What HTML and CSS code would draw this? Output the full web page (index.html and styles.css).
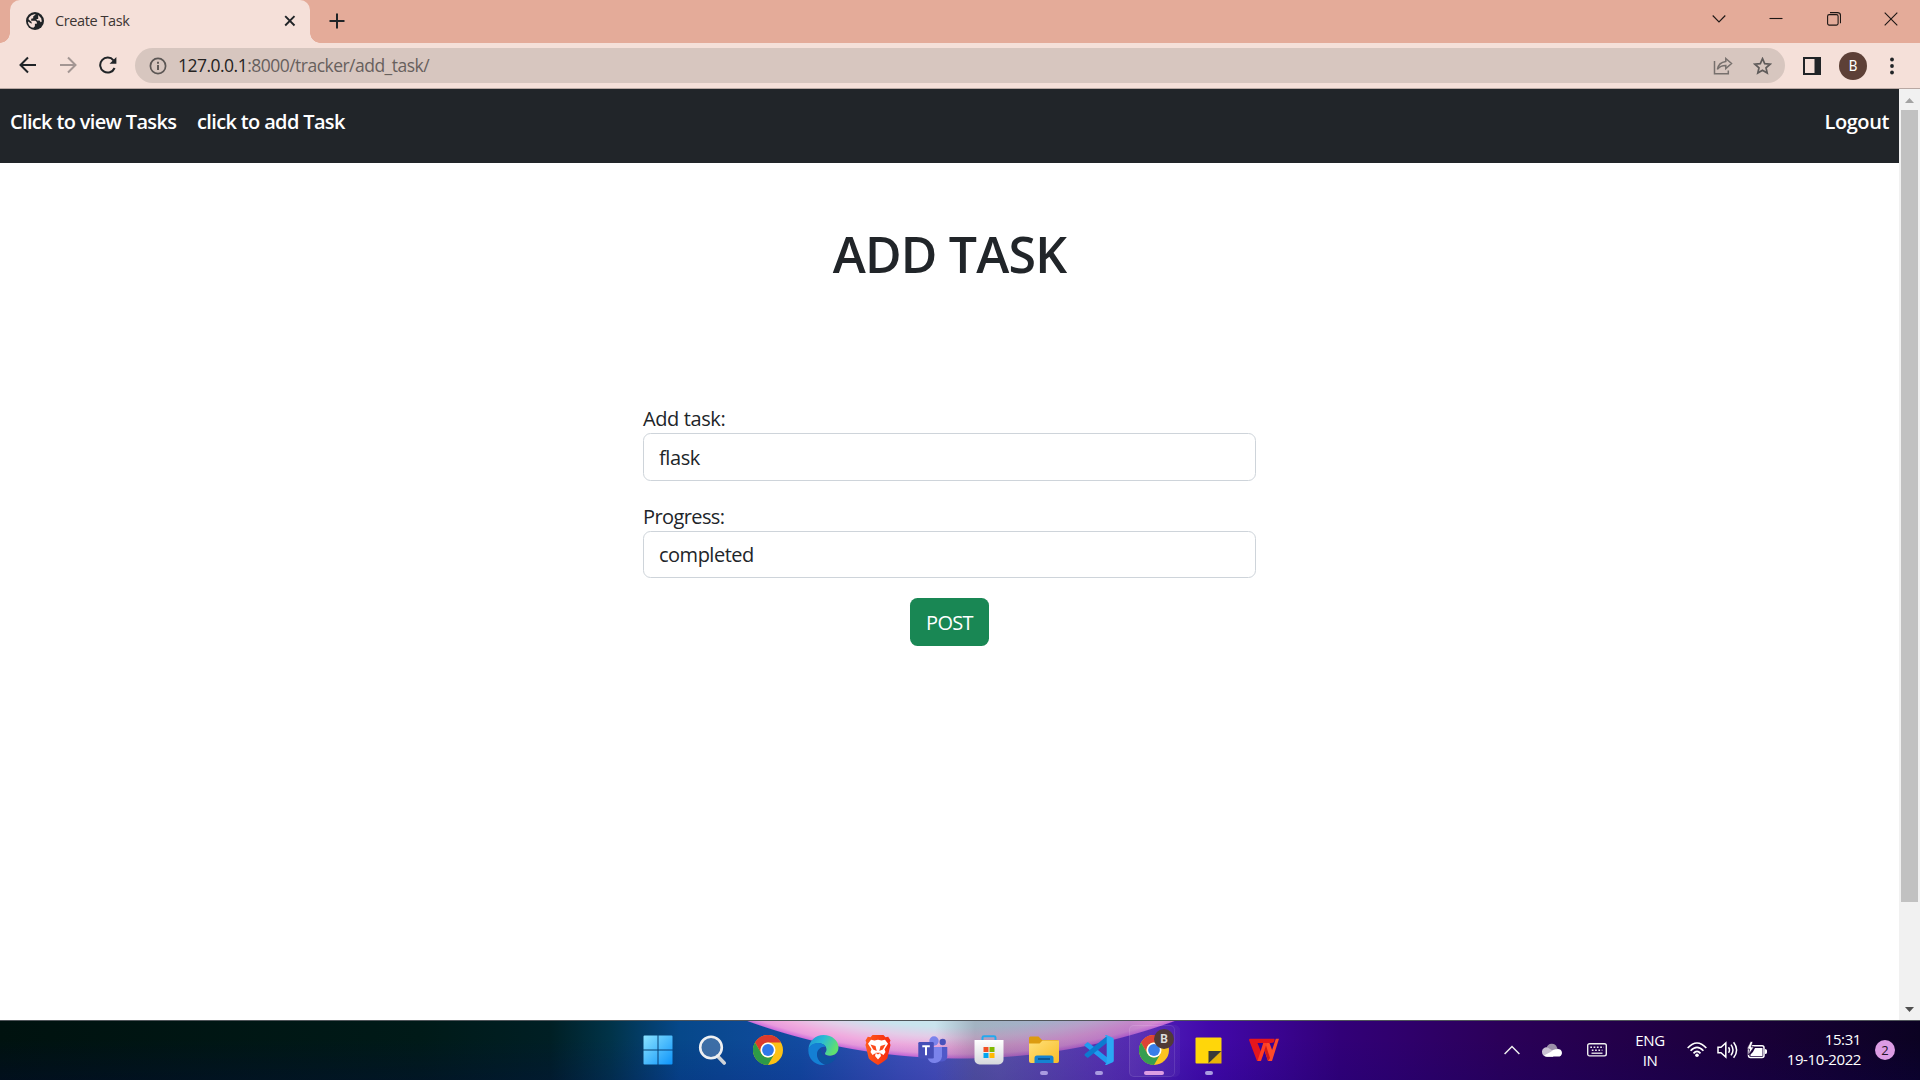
FILE: index.html
```
<!DOCTYPE html>
<html lang="en">
<head>
<meta charset="utf-8">
<title>Create Task</title>
<link rel="stylesheet" href="styles.css">
</head>
<body>
<div class="screen">
  <header class="tabstrip">
    <div class="tab">
      <svg class="globe" width="18" height="18" viewBox="0 0 18 18"><circle cx="9" cy="9" r="9" fill="#202427"/><path d="M9.8 2.2 7.2 4.6v1.6l-2 .6v1.9h4.2l1.4 1.2v1.8h-1.9v2.6l-1.5 1.5C4.200 15.300 2 12.700 2 9.400l3.600 2.300V10L2.400 7.200C3.200 4.300 6 2.100 9.800 2.200zM12.200 3l3 3.200.6 3.200-1.200.8-1-1.700h-2.400l-.9-1.600h1.900z" fill="#f5e0d9"/></svg>
      <span class="tab-title">Create Task</span>
      <svg class="tab-close" width="12" height="12" viewBox="0 0 12 12"><path d="M1.200 1.200 10.500 10.500M10.500 1.200 1.200 10.500" stroke="#202427" stroke-width="1.900"/></svg>
    </div>
    <svg class="newtab" width="16" height="16" viewBox="0 0 16 16"><path d="M8 .5v15M.5 8h15" stroke="#202427" stroke-width="2"/></svg>
    <div class="window-buttons">
      <svg width="14" height="14" viewBox="0 0 14 14"><path d="M.7 3.500 7 10l6.300-6.500"/></svg>
      <svg width="14" height="14" viewBox="0 0 14 14"><path d="M.5 6.500h13"/></svg>
      <svg width="14" height="14" viewBox="0 0 14 14"><rect x=".6" y="2.600" width="10.500" height="10.500" rx="1.600"/><path d="M3 .6h7.500q3 0 3 3v7.600"/></svg>
      <svg width="14" height="14" viewBox="0 0 14 14"><path d="m.7.7 12.600 12.600M13.300.7.7 13.300"/></svg>
    </div>
  </header>
  <div class="toolbar">
    <svg class="nav-icon" width="18" height="18" viewBox="0 0 18 18"><path d="M17 9H2M9 1.500 1.500 9 9 16.500"/></svg>
    <svg class="nav-icon dim" width="18" height="18" viewBox="0 0 18 18"><path d="M1 9h15M9 1.500 16.500 9 9 16.500"/></svg>
    <svg class="nav-icon" width="18" height="18" viewBox="0 0 18 18"><path d="M15.600 12A7.500 7.500 0 1 1 14.500 4.300"/><path d="M17.400 1v6.800h-6.800z" fill="#202427" stroke="none"/></svg>
    <div class="omnibox">
      <svg width="18" height="18" viewBox="0 0 18 18" fill="none" stroke="#5b5654"><circle cx="9" cy="9" r="7.600" stroke-width="1.700"/><path d="M9 8v5M9 4.800v1.900" stroke-width="1.900"/></svg>
      <span class="url"><b>127.0.0.1</b>:8000/tracker/add_task/</span>
      <svg class="share" width="20" height="18" viewBox="0 0 20 18" fill="none" stroke="#77706d" stroke-width="1.500"><path d="M1.500 4v12.800h13.800v-3.300"/><path d="M12.800 1.500 18.500 6.500l-5.700 5V8.600c-4 0-6.300 1-8.400 3.700.7-4.400 3.400-7.300 8.400-7.900z"/></svg>
      <svg width="19" height="18" viewBox="0 0 19 18" fill="none" stroke="#5f5b5a" stroke-width="1.700"><path d="m9.500 1.700 2.200 5 5.400.5-4.100 3.600 1.200 5.300-4.700-2.800-4.700 2.800L6 10.800 1.900 7.200l5.400-.5z"/></svg>
    </div>
    <svg class="panel" width="18" height="18" viewBox="0 0 18 18"><path d="M1 1h16v16H1z" fill="none" stroke="#202427" stroke-width="2"/><path d="M11.500 1H17v16h-5.500z" fill="#202427"/></svg>
    <span class="avatar">B</span>
    <svg class="dots" width="4" height="18" viewBox="0 0 4 18" fill="#202427"><circle cx="2" cy="2.500" r="1.900"/><circle cx="2" cy="9" r="1.900"/><circle cx="2" cy="15.500" r="1.900"/></svg>
  </div>
  <div class="viewport">
    <main class="page">
      <nav class="navbar">
        <a class="link-view">Click to view Tasks</a>
        <a class="link-add">click to add Task</a>
        <a class="link-out">Logout</a>
      </nav>
      <h1>ADD TASK</h1>
      <form class="form">
        <label class="label-task" for="task">Add task:</label>
        <input id="task" class="input-task" type="text" value="flask">
        <label class="label-progress" for="progress">Progress:</label>
        <input id="progress" class="input-progress" type="text" value="completed">
        <button type="button">POST</button>
      </form>
    </main>
    <div class="scrollbar">
      <svg width="9" height="5" viewBox="0 0 9 5"><path d="M0 5 4.500 0 9 5z" fill="#a3a3a3"/></svg>
      <div class="thumb"></div>
      <svg class="down" width="9" height="5" viewBox="0 0 9 5"><path d="M0 0h9L4.500 5z" fill="#505050"/></svg>
    </div>
  </div>
  <footer class="taskbar">
    <svg width="0" height="0" class="defs">
      <defs>
        <linearGradient id="win" x1="0" y1="0" x2="1" y2="1"><stop offset="0" stop-color="#8be3ff"/><stop offset="1" stop-color="#0d94fa"/></linearGradient>
        <linearGradient id="edgeTop" x1="0" y1="0" x2="1" y2=".4"><stop offset="0" stop-color="#1b8fd8"/><stop offset=".5" stop-color="#2bbbd4"/><stop offset="1" stop-color="#60e070"/></linearGradient>
        <linearGradient id="store" x1="0" y1="0" x2="0" y2="1"><stop offset="0" stop-color="#fff"/><stop offset="1" stop-color="#d5d8dc"/></linearGradient>
        <linearGradient id="folder" x1="0" y1="0" x2="1" y2="1"><stop offset="0" stop-color="#ffe07a"/><stop offset="1" stop-color="#f8bd28"/></linearGradient>
        <linearGradient id="brave" x1="0" y1="0" x2="1" y2="0"><stop offset="0" stop-color="#ff5a1c"/><stop offset="1" stop-color="#f62a10"/></linearGradient>
        <symbol id="chrome" viewBox="0 0 30 30"><circle cx="15" cy="15" r="15" fill="#fbc116"/><path d="M2 7.500A15 15 0 0 1 28 7.500H15A7.500 7.500 0 0 0 8.500 18.800z" fill="#dc3a2d"/><path d="M2 7.500 8.500 18.800A7.500 7.500 0 0 0 21.500 18.800L15 30A15 15 0 0 1 2 7.500z" fill="#2d9a48"/><circle cx="15" cy="15" r="7.500" fill="#fff"/><circle cx="15" cy="15" r="5.900" fill="#2f78e8"/></symbol>
      </defs>
    </svg>
    <div class="apps">
      <div class="app"><svg width="30" height="30" viewBox="0 0 30 30"><path d="M.5 1.500q0-1 1-1H14.500V14.500H.5zM15.500.5H28.500q1 0 1 1V14.500h-14zM.5 15.500H14.500v14H1.500q-1 0-1-1zM15.500 15.500h14v13q0 1-1 1h-13z" fill="url(#win)"/></svg></div>
      <div class="app"><svg width="30" height="30" viewBox="0 0 30 30"><path d="m19.500 21 6.700 7" stroke="#cfd3d8" stroke-width="3.600" stroke-linecap="round"/><circle cx="13" cy="12.500" r="10.800" fill="#8aa8c866" stroke="#eef0f2" stroke-width="2.600"/></svg></div>
      <div class="app"><svg width="30" height="30"><use href="#chrome"/></svg></div>
      <div class="app"><svg width="31" height="30" viewBox="0 0 31 30"><path d="M.5 14C1 6 7.500 0 15.500 0 24 0 30.500 5.500 30.500 12.500c0 5-3.800 8.200-8.500 8.200-3 0-5-.9-5-2.200 0-1.100 1.500-1.700 1.500-4C18.500 10 14 7.800 10 8.200 5.500 8.500 2 10.500.5 14z" fill="url(#edgeTop)"/><path d="M.4 14C2 9.500 6.500 8 10.200 8c3.500 0 6.600 1.700 7.800 4.200-4-1.500-9 2-9 7.200 0 5 3.600 9 8.300 10.200C8 31.500-.5 24 .4 14z" fill="#1480d4"/><path d="M12.300 13.600C7.500 17 8.500 26.500 17.300 29.600c5.200-.6 8.800-3.400 10.900-7.100.5-.9 0-1.300-.9-.9-6 3-14.500.8-15-8z" fill="#0d529f"/></svg></div>
      <div class="app"><svg width="26" height="30" viewBox="0 0 26 30"><path d="M7.500 0h11l2 2.200 2.700-.4 2.300 3.700-.8 2 .8 2.500-3.200 13.200Q21.500 25 13 30 4.500 25 3.700 23.200L.5 10l.8-2.500-.8-2 2.300-3.700 2.700.4z" fill="url(#brave)"/><path d="m13 4.700 3.500.7 3.500-.7 3 4-3.500 5.500 1 2.700-2 3-3.300-2 .8 3.200-3 3.300-3-3.300.8-3.200-3.300 2-2-3 1-2.700L3 8.700l3-4 3.500.7z" fill="#fff"/><path d="m5.500 9.500 5 1.500 1.200 5-3.500-1.500M20.500 9.500l-5 1.500-1.200 5 3.500-1.500M10.500 17.800h5L13 19.600z" fill="#fb4a1a"/></svg></div>
      <div class="app"><svg width="30" height="28" viewBox="0 0 30 28"><circle cx="24.700" cy="6" r="3.200" fill="#4a52bb"/><path d="M19 11h10.300v9a5.500 5.500 0 0 1-8 5z" fill="#5059c9"/><circle cx="16" cy="5" r="4.700" fill="#7b83eb"/><path d="M10 11h14v9.500A7.500 7.500 0 0 1 9.500 22z" fill="#7b83eb"/><rect x=".3" y="6" width="15.500" height="16.500" rx="1.300" fill="#464eb8"/><path d="M4.300 10.300h7.500M8 10.300v9" stroke="#fff" stroke-width="2" fill="none"/></svg></div>
      <div class="app"><svg width="30" height="30" viewBox="0 0 30 30"><path d="M8.500 6V2.500Q8.500 1.200 10 1.200h10q1.500 0 1.500 1.300V6" fill="none" stroke="#23a9ee" stroke-width="2"/><path d="M.5 5h29v19.500a5 5 0 0 1-5 5h-19a5 5 0 0 1-5-5z" fill="url(#store)"/><path d="M9.500 12h5v5h-5z" fill="#f05024"/><path d="M15.500 12h5v5h-5z" fill="#7fb900"/><path d="M9.500 18h5v5h-5z" fill="#02a4ef"/><path d="M15.500 18h5v5h-5z" fill="#ffb902"/></svg></div>
      <div class="app run"><svg width="30" height="28" viewBox="0 0 30 28"><path d="M0 2q0-1.500 1.500-1.500h8l3.500 3.500h15q2 0 2 2v8H0z" fill="#dc9b10"/><path d="M0 7.500h10.500L13.500 4.500H30V25q0 2-2 2H2q-2 0-2-2z" fill="url(#folder)"/><path d="M5.500 27v-5q0-2.500 2.500-2.500h14q2.500 0 2.500 2.500v5z" fill="#1583d2"/><path d="M9 23h12" stroke="#0a4a80" stroke-width="1.500"/></svg></div>
      <div class="app run"><svg width="30" height="30" viewBox="0 0 30 30"><path d="m1 9.200 2-1.700q.7-.4 1.400.1L23 22.200V29L.8 11q-.8-.9.200-1.800z" fill="#1f9cf0"/><path d="m1 20.800 2 1.700q.7.4 1.400-.1L23 7.800V1L.8 19q-.8.900.2 1.800z" fill="#0c7bd0"/><path d="m22.500 0 6.300 2.800q1 .5 1 1.700v21q0 1.200-1 1.700L22.500 30q-1 .2-1.500-.8L22.700 28V2L21 .8q.5-1 1.500-.8z" fill="#2ba8f4"/></svg></div>
      <div class="app run active"><svg width="30" height="30"><use href="#chrome"/></svg><span class="profile">B</span></div>
      <div class="app run"><svg width="27" height="27" viewBox="0 0 27 27"><path d="M1.500.5h24q1 0 1 1v12.500L14 26.500H1.500q-1 0-1-1v-24q0-1 1-1z" fill="#ffd60a"/><path d="M13.500 14h13L13.500 26.500z" fill="#393939"/><path d="M26.500 14v12.500h-13z" fill="#e8b408"/></svg></div>
      <div class="app"><svg width="30" height="24" viewBox="0 0 30 24"><path d="M1 .8h24.500Q26 5 22 5H8.500l5 12.500L10.500 23H8L.2 2.500Q-.2.8 1 .8z" fill="#e5161c"/><path d="M17 5h3.500l2.600 7L26.800.8H30L23 23h-4L15.300 12z" fill="#ff4a28"/><path d="M14.200 5h4L12 23H8.500z" fill="#ff3d24"/><path d="m15.500 12 1.500-4.500L21 20l-2 3z" fill="#d01818"/></svg></div>
    </div>
    <div class="tray">
      <svg width="16" height="10" viewBox="0 0 16 10"><path d="m.6 9 7.400-7.500L15.400 9" fill="none" stroke="#eee" stroke-width="1.500"/></svg>
      <svg class="cloud" width="20" height="14" viewBox="0 0 20 14"><path d="M4.500 5A5.500 5.500 0 0 1 15 4.500L17 9 6 10z" fill="#9b8fa8"/><path d="M0 9a4.300 4.300 0 0 1 6-4.300L13 9l-2 5H5a5 5 0 0 1-5-5z" fill="#c9c2d2"/><path d="M2 12.500 9 8.700q2-3 5.500-2.500A4 4 0 0 1 20 9.900 4 4 0 0 1 16 13.500H5q-2 0-3-1z" fill="#fff"/></svg>
      <svg class="keys" width="20" height="14" viewBox="0 0 20 14"><rect x=".7" y=".7" width="18.600" height="12.200" rx="1.800" fill="none" stroke="#eee" stroke-width="1.400"/><path d="M3.300 4.200h13.400M4.800 7.200h10.600" stroke="#eee" stroke-width="1.500" stroke-dasharray="1.700 1.600"/><path d="M4.500 10.200h11" stroke="#eee" stroke-width="1.300"/></svg>
      <div class="lang"><span>ENG</span><span>IN</span></div>
      <svg class="wifi" width="20" height="16" viewBox="0 0 20 16" fill="none" stroke="#fff" stroke-width="1.700"><path d="M.7 6Q10-4 19.300 6M3.600 8.800Q10 1.800 16.400 8.800M6.500 11.400Q10 7.500 13.500 11.400"/><circle cx="10" cy="13.300" r="1.800" fill="#fff" stroke="none"/></svg>
      <svg class="sound" width="21" height="18" viewBox="0 0 21 18" fill="none" stroke="#fff" stroke-width="1.500"><path d="M1 6.200h3L8.800 2v14L4 11.800H1z"/><path d="M11.500 6.200q2 2.800 0 5.600M14 3.600q4 5.400 0 10.800M16.600 1.200q6 7.800 0 15.600"/></svg>
      <svg class="battery" width="20" height="18" viewBox="0 0 20 18"><rect x="1.500" y="4.800" width="15.500" height="11.700" rx="2" fill="none" stroke="#fff" stroke-width="1.500"/><path d="M8 7h7.500v8H3.500v-1.500q3-2.500 4.500-6.500zM18 8q2 0 2 1.500v2Q20 13 18 13z" fill="#fff"/><path d="M3.500.5 0 8h2.500L1.500 14 7 6H4.200L6 .5z" fill="#fff" stroke="#1c0038" stroke-width=".7"/></svg>
      <div class="clock"><span>15:31</span><span>19-10-2022</span></div>
      <span class="badge">2</span>
    </div>
  </footer>
</div>
</body>
</html>
```
FILE: styles.css
```
* { box-sizing: border-box; }
body { margin: 0; font-family: "Open Sans", "Noto Sans", sans-serif; overflow: hidden; background: #fff; }
svg { display: block; flex: none; }
.screen { width: 1920px; height: 1080px; display: flex; flex-direction: column; }

.tabstrip { height: 43px; background: #e4ab99; display: flex; align-items: flex-start; padding-left: 10px; }
.tab { position: relative; width: 300px; height: 43px; background: #f5e0d9; border-radius: 10px 10px 0 0; display: flex; align-items: center; padding: 0 14px 1px 16px; }
.tab::before, .tab::after { content: ""; position: absolute; bottom: 0; width: 10px; height: 10px; }
.tab::before { left: -10px; background: radial-gradient(circle at 0 0, transparent 9.5px, #f5e0d9 10px); }
.tab::after { right: -10px; background: radial-gradient(circle at 100% 0, transparent 9.5px, #f5e0d9 10px); }
.tab-title { margin-left: 11px; font-size: 14.500px; letter-spacing: -.4px; color: #3c3533; flex: 1; line-height: 20px; padding-bottom: 1px; }
.newtab { margin: 13px 0 0 19px; }
.window-buttons { margin-left: auto; display: flex; gap: 43.500px; padding: 12px 22px 0 0; }
.window-buttons svg { fill: none; stroke: #1d1715; stroke-width: 1.100; }

.toolbar { height: 46px; background: #f5e0d9; border-bottom: 1px solid #b8a8a3; display: flex; align-items: center; padding-left: 19px; }
.nav-icon { position: relative; top: -1px; fill: none; stroke: #202427; stroke-width: 2; margin-right: 22px; }
.nav-icon.dim { stroke: #a39693; }
.omnibox { width: 1650px; height: 35px; margin-left: -4px; border-radius: 18px; background: #d7c6bf; display: flex; align-items: center; padding: 0 13px 0 14px; }
.url { flex: 1; margin-left: 11px; font-size: 17.500px; letter-spacing: -.52px; color: #67605d; line-height: 24px; padding-bottom: 1px; }
.url b { font-weight: 400; color: #252322; }
.share { margin-right: 20px; }
.panel { margin-left: 18px; }
.avatar { width: 28px; height: 28px; margin-left: 18px; border-radius: 50%; background: #5d4037; color: #fff; font: 14px/28px Roboto, sans-serif; text-align: center; }
.dots { margin-left: 23px; }

.viewport { height: 931px; display: flex; }
.page { flex: 1; background: #fff; color: #212529; }
.navbar { height: 74px; background: #212529; display: flex; padding: 18px 10px 0; gap: 20px; }
.navbar a { color: #fff; font-weight: 600; font-size: 20px; line-height: 30px; white-space: nowrap; }
.link-view { width: 167px; letter-spacing: -.66px; }
.link-add { letter-spacing: -.65px; }
.link-out { margin-left: auto; letter-spacing: -.4px; }
h1 { margin: 61px 0 0; height: 60px; line-height: 60px; font-size: 50px; font-weight: 600; text-align: center; letter-spacing: -.8px; }
.form { width: 613px; margin: 119px auto 0; display: flex; flex-direction: column; }
label { font-size: 20px; line-height: 30px; height: 30px; padding-top: 1px; }
.label-task { letter-spacing: -.4px; }
.label-progress { letter-spacing: -.6px; }
input { margin-bottom: 20px; border: 1px solid #ced4da; border-radius: 7.500px; padding: 0 15px; font: 20px "Open Sans", sans-serif; color: #212529; background: #fff; outline: 0; }
.input-task { height: 48px; letter-spacing: -.4px; }
.input-progress { height: 47px; letter-spacing: -.5px; padding-bottom: 1px; }
button { width: 79px; height: 48px; align-self: center; border: 0; border-radius: 7.500px; background: #198754; color: #fff; font: 20px "Open Sans", sans-serif; padding: 0; letter-spacing: -.7px; }
.scrollbar { width: 21px; background: #f1f1f1; display: flex; flex-direction: column; align-items: center; padding-top: 9px; }
.thumb { width: 17px; height: 792px; margin-top: 7px; background: #c1c1c1; }
.down { margin-top: auto; margin-bottom: 8px; }

.taskbar { position: relative; height: 60px; border-top: 1px solid #50555a; display: flex; align-items: flex-start; overflow: hidden;
  background:
    radial-gradient(circle 628px at 961px -590px, #bfe4ee 0, #c9e4ee 596px, #e3cde8 606px, #f0acdf 616px, #e99bdd 623px, #d070dc 627px, transparent 628px),
    linear-gradient(90deg, #00120f 0, #001a18 420px, #001f24 550px, #013348 610px, #06488a 680px, #124ba0 800px, #3c50b8 900px, #5a55c4 1000px, #5530c0 1110px, #4208aa 1210px, #320078 1340px, #2b0059 1500px, #1a0038 1750px, #0b0222 1920px);
}
.taskbar::before { content: ""; position: absolute; inset: 0; background: linear-gradient(90deg, transparent 935px, rgba(80, 75, 100, .32) 975px, rgba(90, 45, 150, .3) 1130px, transparent 1180px), linear-gradient(180deg, transparent 30%, rgba(10, 0, 110, .15)); }
.defs { position: absolute; }
.apps { position: relative; display: flex; margin-left: 630.500px; }
.app { position: relative; width: 55.080px; height: 58px; display: flex; align-items: center; justify-content: center; }
.app.run::after { content: ""; position: absolute; left: 24px; bottom: 4px; width: 8px; height: 4px; border-radius: 2px; background: #a99be0; }
.app.active::before { content: ""; position: absolute; left: 3px; top: 4px; width: 44px; height: 50px; border: 1px solid #ffffff1c; border-radius: 5px; background: #ffffff0c; box-shadow: 5px 0 0 0 #ffffff0a; }
.app.active::after { left: 18px; width: 20px; background: #dd9de3; }
.profile { position: absolute; left: 28px; top: 8px; width: 20px; height: 20px; border-radius: 50%; background: #513a36; color: #ddd; font: bold 12px/20px Roboto, sans-serif; text-align: center; }

.tray { position: relative; height: 57px; display: flex; align-items: center; margin-left: auto; padding-right: 25px; color: #fff; }
.cloud { margin-left: 22px; }
.keys { margin-left: 25px; }
.lang, .clock { display: flex; flex-direction: column; font-size: 15px; line-height: 20px; padding-top: 1px; }
.lang { width: 40px; margin-left: 23px; align-items: center; letter-spacing: -.4px; }
.wifi { margin-left: 17px; }
.sound { margin-left: 10px; }
.battery { margin-left: 9px; }
.clock { width: 84px; margin-left: 10px; align-items: flex-end; letter-spacing: -.4px; white-space: nowrap; padding: 0 0 1px; }
.badge { width: 20px; height: 20px; margin-left: 14px; border-radius: 50%; background: #dc9ce4; color: #241526; font-size: 13px; line-height: 20px; text-align: center; }
```
